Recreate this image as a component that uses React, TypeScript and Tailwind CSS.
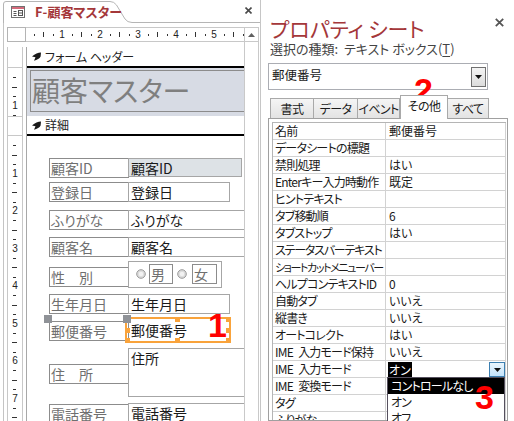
// Access form designer + property sheet (F-顧客マスター)

const UNIT_H = 38; // px per cm on the horizontal ruler
const UNIT_V = 37.5; // px per cm on the vertical ruler

const LABEL =
  'border border-[#8c8c8c] pl-[1px] text-[14px] leading-[18px] text-[#6f6f6f] whitespace-nowrap overflow-hidden';
const VALUE =
  'border border-[#a6a6a6] pl-[2px] text-[14px] leading-[18px] text-[#1a1a1a] whitespace-nowrap overflow-hidden';
const BADGE =
  "absolute font-['Liberation_Sans',sans-serif] font-bold text-[34px] leading-none text-[#ff0000]";
const TAB =
  'h-[20px] border border-b-0 border-[#a9a9a9] bg-gradient-to-b from-[#f5f5f5] to-[#e3e3e3] text-center leading-[19px] whitespace-nowrap tracking-[-0.6px]';
const NAME =
  'w-[113px] shrink-0 border-r border-[#d2d2d2] pl-[2px] whitespace-nowrap overflow-hidden';

const PROPS: [string, string][] = [
  ['名前', '郵便番号'],
  ['データシートの標題', ''],
  ['禁則処理', 'はい'],
  ['Enterキー入力時動作', '既定'],
  ['ヒントテキスト', ''],
  ['タブ移動順', '6'],
  ['タブストップ', 'はい'],
  ['ステータスバーテキスト', ''],
  ['ショートカットメニューバー', ''],
  ['ヘルプコンテキストID', '0'],
  ['自動タブ', 'いいえ'],
  ['縦書き', 'いいえ'],
  ['オートコレクト', 'はい'],
  ['IME\u2002入力モード保持', 'いいえ'],
  ['IME\u2002入力モード', 'オン'],
  ['IME\u2002変換モード', ''],
  ['タグ', ''],
  ['ふりがな', ''],
];

export default function App() {
  return (
    <div className="flex w-[514px] h-[421px] overflow-hidden bg-white text-[#1a1a1a] font-['Noto_Sans_CJK_JP',sans-serif] [font-feature-settings:'palt']">
      <FormDesigner />
      <PropertySheet />
    </div>
  );
}

/* ---------------- left: form design view ---------------- */

function FormDesigner() {
  return (
    <div className="flex flex-col w-[260px] h-full shrink-0">
      <DocTab />
      <div className="flex flex-1 min-h-0 ml-[3px] pt-[4px] border-l border-[#c4c4c4]">
        {/* ruler column */}
        <div className="flex flex-col w-[22px] shrink-0 pl-[3px]">
          <div className="h-[15px] w-[19px] shrink-0 border border-[#b4b4b4]" />
          <div className="mt-[5px] flex flex-col flex-1 w-[16px] border-x border-[#c8c8c8]">
            <div className="h-[21px] shrink-0 border-b border-[#c8c8c8]" />
            <VRuler className="h-[48px] shrink-0" units={2} nums={1} />
            <div className="h-[20px] shrink-0 border-y border-[#c8c8c8]" />
            <VRuler className="flex-1" units={8} nums={7} />
          </div>
        </div>

        {/* form column */}
        <div className="flex flex-col w-[218px] shrink-0 overflow-hidden">
          <HRuler />
          <div className="mt-[5px] flex flex-col flex-1 border-l border-[#a8a8a8]">
            <SectionBar className="h-[21px]" label="フォーム ヘッダー" />
            <div className="h-[48px] shrink-0 bg-[#d7dbe4] pt-[2px] pl-[3px]">
              <div className="h-[42px] w-[240px] border border-[#8c8c8c] pl-[1px] text-[28px] leading-[38px] text-[#7f7f7f] whitespace-nowrap">
                顧客マスター
              </div>
            </div>
            <SectionBar className="h-[20px]" label="詳細" />
            <DetailSection />
          </div>
        </div>

        <Scrollbar />
      </div>
    </div>
  );
}

function DocTab() {
  return (
    <div className="relative h-[23px] shrink-0">
      <svg className="absolute left-0 top-0" width="260" height="23" viewBox="0 0 260 23">
        <path
          d="M3.5 23 V4 Q3.5 1.5 6 1.5 H110 Q114 1.5 116.5 5 L125 19 Q127.5 22.5 132 22.5 H260"
          fill="white"
          stroke="#b5b5b5"
        />
      </svg>
      <div className="relative flex items-center h-full pl-[11px] pr-[8px] pt-[1px] gap-[10px]">
        <svg width="14" height="12" viewBox="0 0 14 12">
          <rect x="0.5" y="0.5" width="13" height="11" fill="white" stroke="#707070" />
          <rect x="1" y="1" width="12" height="2" fill="#d4697a" />
          <path d="M2.5 5.5h3M2.5 7.5h3M2.5 9.5h3" stroke="#555" />
          <rect x="7.5" y="4.5" width="4" height="5" fill="none" stroke="#555" />
          <path d="M7.5 7h4" stroke="#555" />
        </svg>
        <span className="flex-1 text-[13px] leading-[16px] font-bold text-[#a4373a]">F-顧客マスター</span>
        <svg width="7" height="7" viewBox="0 0 7 7" className="-mt-[3px]">
          <path d="M0.5 0.5 L6.5 6.5 M6.5 0.5 L0.5 6.5" stroke="#4a4a4a" strokeWidth="1.6" />
        </svg>
      </div>
    </div>
  );
}

function HRuler() {
  const units = [0, 1, 2, 3, 4, 5];
  return (
    <div className="relative h-[15px] shrink-0 border-y border-[#c8c8c8] bg-white">
      <svg className="absolute left-0 top-0" width="218" height="13">
        {units.map((i) => {
          const o = -2 + UNIT_H * i;
          return (
            <g key={i} fill="#333">
              <rect x={Math.round(o + 9.5)} y={6} width={1} height={2} />
              <rect x={Math.round(o + 19)} y={4} width={1} height={5} />
              <rect x={Math.round(o + 28.5)} y={6} width={1} height={2} />
            </g>
          );
        })}
      </svg>
      {units.slice(1).map((i) => (
        <span
          key={i}
          className="absolute top-[1px] w-[10px] -ml-[5px] text-center text-[10px] leading-[11px] text-[#222] font-['Liberation_Sans',sans-serif]"
          style={{ left: -2 + UNIT_H * i }}
        >
          {i}
        </span>
      ))}
    </div>
  );
}

function VRuler({ className, units, nums }: { className: string; units: number; nums: number }) {
  const list = Array.from({ length: units }, (_, i) => i);
  return (
    <div className={'relative overflow-hidden ' + className}>
      <svg className="absolute left-0 top-0" width="14" height="320">
        {list.map((i) => {
          const o = UNIT_V * i;
          return (
            <g key={i} fill="#333">
              <rect x={5} y={Math.round(o + 9.4)} width={3} height={1} />
              <rect x={4} y={Math.round(o + 18.75)} width={5} height={1} />
              <rect x={5} y={Math.round(o + 28.1)} width={3} height={1} />
            </g>
          );
        })}
      </svg>
      {list.slice(0, nums).map((i) => (
        <span
          key={i}
          className="absolute left-0 w-[14px] text-center text-[10px] leading-[11px] text-[#222] font-['Liberation_Sans',sans-serif]"
          style={{ top: UNIT_V * (i + 1) - 6 }}
        >
          {i + 1}
        </span>
      ))}
    </div>
  );
}

function SectionBar({ className, label }: { className: string; label: string }) {
  return (
    <div
      className={
        'flex items-center shrink-0 gap-[4px] pl-[5px] bg-white border-b-2 border-black text-[12px] leading-[14px] text-[#222] ' +
        className
      }
    >
      <svg width="9" height="9" viewBox="0 0 9 9">
        <path d="M9 0.5 C6 0.5 3 2 0 4.5 L3.5 5.2 L2 8.8 C5 8 7.8 6.5 8.6 4.5 Z" fill="#1a1a1a" />
      </svg>
      <span>{label}</span>
    </div>
  );
}

function Radio() {
  return (
    <svg width="10" height="10" viewBox="0 0 10 10">
      <circle cx="5" cy="5" r="4.3" fill="#dcdcdc" stroke="#9a9a9a" />
      <circle cx="5" cy="5" r="2.2" fill="#f2f2f2" />
    </svg>
  );
}

function DetailSection() {
  return (
    <div className="relative flex-1 bg-white">
      <div className={LABEL + ' absolute left-[22px] top-[22px] w-[80px] h-[20px]'}>顧客ID</div>
      <div className={VALUE + ' absolute left-[101px] top-[22px] w-[114px] h-[19px] bg-[#dde2e6]'}>顧客ID</div>

      <div className={LABEL + ' absolute left-[22px] top-[46px] w-[80px] h-[20px]'}>登録日</div>
      <div className={VALUE + ' absolute left-[101px] top-[46px] w-[102px] h-[20px]'}>登録日</div>

      <div className={LABEL + ' absolute left-[22px] top-[74px] w-[80px] h-[20px]'}>ふりがな</div>
      <div className={VALUE + ' absolute left-[101px] top-[74px] w-[130px] h-[20px]'}>ふりがな</div>

      <div className={LABEL + ' absolute left-[22px] top-[101px] w-[80px] h-[20px]'}>顧客名</div>
      <div className={VALUE + ' absolute left-[101px] top-[101px] w-[130px] h-[20px]'}>顧客名</div>

      <div className={LABEL + ' absolute left-[22px] top-[131px] w-[80px] h-[20px]'}>性　別</div>
      {/* option group */}
      <div className="absolute left-[101px] top-[125px] w-[94px] h-[27px] border border-[#a6a6a6] flex items-center gap-[2px] pl-[7px] pb-[1px]">
        <Radio />
        <div className={LABEL + ' w-[24px] h-[20px] ml-[1px]'}>男</div>
        <div className="ml-[2px] flex">
          <Radio />
        </div>
        <div className={LABEL + ' w-[25px] h-[20px] ml-[3px]'}>女</div>
      </div>

      <div className={LABEL + ' absolute left-[22px] top-[158px] w-[80px] h-[20px]'}>生年月日</div>
      <div className={VALUE + ' absolute left-[101px] top-[158px] w-[102px] h-[20px]'}>生年月日</div>

      {/* selected control */}
      <div className={LABEL + ' absolute left-[22px] top-[185px] w-[80px] h-[20px]'}>郵便番号</div>
      <div className={VALUE + ' absolute left-[101px] top-[184px] w-[102px] h-[20px] border-transparent'}>郵便番号</div>
      <svg className="absolute left-[96px] top-[179px]" width="112" height="31" viewBox="0 0 112 31">
        <rect x="3" y="3" width="104" height="24" fill="none" stroke="#f9a33b" strokeWidth="2" />
        <g fill="#f9a33b">
          <rect x="2" y="2" width="5" height="5" />
          <rect x="52" y="2" width="5" height="5" />
          <rect x="103" y="2" width="5" height="5" />
          <rect x="2" y="13" width="5" height="5" />
          <rect x="103" y="13" width="5" height="5" />
          <rect x="2" y="23" width="5" height="5" />
          <rect x="52" y="23" width="5" height="5" />
          <rect x="103" y="23" width="5" height="5" />
        </g>
        <rect x="0" y="0" width="8" height="8" fill="#8f9297" />
      </svg>
      <span className="absolute left-[17px] top-[179px] w-[8px] h-[8px] bg-[#8f9297]" />
      <span className={BADGE + ' left-[181px] top-[172px]'}>1</span>

      <div className={LABEL + ' absolute left-[22px] top-[228px] w-[80px] h-[20px]'}>住　所</div>
      <div className={VALUE + ' absolute left-[101px] top-[212px] w-[130px] h-[49px]'}>住所</div>

      <div className={LABEL + ' absolute left-[22px] top-[268px] w-[80px] h-[20px]'}>電話番号</div>
      <div className={VALUE + ' absolute left-[101px] top-[267px] w-[130px] h-[20px]'}>電話番号</div>
    </div>
  );
}

function Scrollbar() {
  return (
    <div className="flex flex-col w-[15px] shrink-0 border-x border-[#c9c9c9] bg-white">
      <div className="flex items-center justify-center h-[15px] border-y border-[#c9c9c9]">
        <svg width="7" height="4" viewBox="0 0 7 4">
          <path d="M0 4 L3.5 0 L7 4 Z" fill="#606060" />
        </svg>
      </div>
    </div>
  );
}

/* ---------------- right: property sheet ---------------- */

function DownArrow() {
  return (
    <svg width="7" height="4" viewBox="0 0 7 4">
      <path d="M0 0 L7 0 L3.5 4 Z" fill="#111" />
    </svg>
  );
}

function PropertySheet() {
  return (
    <div className="relative flex flex-col flex-1 h-full border-l border-[#c6c6c6] pl-[7px]">
      <div className="flex items-start justify-between mt-[15px] ml-[2px] mr-[10px] h-[26px]">
        <span className="text-[21px] leading-[26px] text-[#a4373a] whitespace-nowrap">プロパティ シート</span>
        <svg className="mt-[3px]" width="9" height="9" viewBox="0 0 9 9">
          <path d="M0.8 0.8 L8.2 8.2 M8.2 0.8 L0.8 8.2" stroke="#555" strokeWidth="1.8" />
        </svg>
      </div>
      <div className="ml-[2px] h-[16px] text-[13px] leading-[16px] text-[#444] whitespace-nowrap">
        選択の種類:&nbsp; テキスト ボックス(<span className="underline underline-offset-2">T</span>)
      </div>

      <div className="flex items-start justify-between mt-[6px] h-[27px] w-[220px] border border-[#abadb3] pl-[3px] pt-[3px] pr-[1px] text-[12.5px] leading-[16px]">
        <span>郵便番号</span>
        <div className="flex items-center justify-center w-[15px] h-[20px] border border-[#707070] bg-gradient-to-b from-[#f4f4f4] to-[#dcdcdc]">
          <DownArrow />
        </div>
      </div>

      {/* tabs */}
      <div className="relative z-10 flex items-end mt-[5px] ml-[2px] h-[23px] text-[12px]">
        <div className={TAB + ' w-[44px]'}>書式</div>
        <div className={TAB + ' w-[44px] border-l-0'}>データ</div>
        <div className={TAB + ' w-[42px] border-l-0'}>イベント</div>
        <div className="w-[48px] h-[24px] -mb-px border border-b-0 border-[#a9a9a9] bg-white text-center leading-[20px] whitespace-nowrap tracking-[-0.6px]">
          その他
        </div>
        <div className={TAB + ' w-[41px] border-l-0'}>すべて</div>
      </div>

      {/* property grid */}
      <div className="flex-1 min-h-0 w-[240px] border border-[#a0a0a0] pl-[3px] pt-[3px] overflow-hidden">
        <div className="w-[234px] border-l border-t border-[#b5b5b5] text-[12px] leading-[16px] text-[#1a1a1a]">
          {PROPS.map(([name, value], i) => (
            <div key={name + i} className="flex h-[17px] border-b border-[#d2d2d2]">
              <div
                className={
                  NAME +
                  (i === 8
                    ? ' text-[11px] tracking-[-1.4px]'
                    : i === 7
                      ? ' tracking-[-1.2px]'
                      : ' tracking-[-0.8px]')
                }
              >
                {name}
              </div>
              {i === 14 ? (
                <div className="flex flex-1 items-start justify-between border-r border-[#d2d2d2] pl-[2px] pt-[1px]">
                  <span className="bg-black text-white px-[1px] leading-[15px]">{value}</span>
                  <div className="flex items-center justify-center w-[16px] h-[15px] border border-[#3c7fb1] bg-gradient-to-b from-[#eaf6fd] to-[#c4e3fb]">
                    <DownArrow />
                  </div>
                </div>
              ) : (
                <div className="flex-1 border-r border-[#d2d2d2] pl-[3px] whitespace-nowrap overflow-hidden">{value}</div>
              )}
            </div>
          ))}
        </div>
      </div>

      {/* open dropdown for IME 入力モード */}
      <div className="absolute z-20 left-[126px] top-[377px] w-[118px] h-[60px] border border-[#55505e] bg-white text-[12px] leading-[16px] tracking-[-0.8px]">
        <div className="h-[16px] bg-black text-white pl-[3px]">コントロールなし</div>
        <div className="h-[16px] pl-[3px]">オン</div>
        <div className="h-[16px] pl-[3px]">オフ</div>
      </div>

      <span className={BADGE + ' left-[153px] top-[73px]'}>2</span>
      <span className={BADGE + ' z-30 left-[214px] top-[380px]'}>3</span>
    </div>
  );
}
